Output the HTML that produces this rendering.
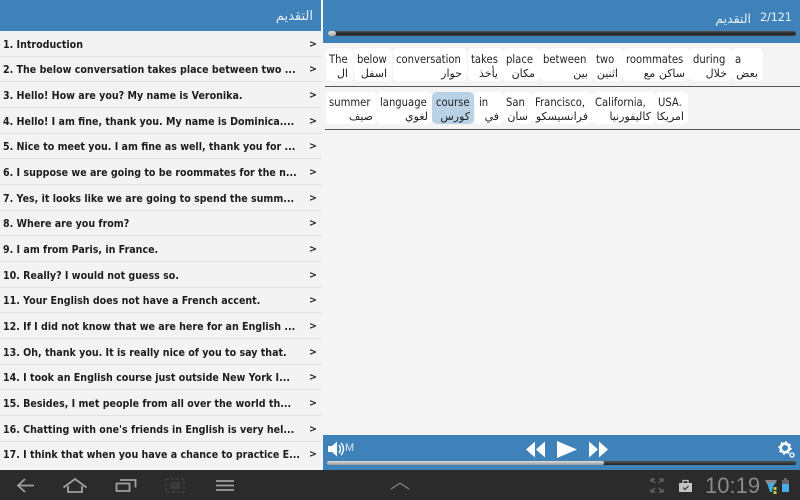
<!DOCTYPE html>
<html><head><meta charset="utf-8">
<style>
html,body{margin:0;padding:0;background:#f3f3f3}
#p{position:relative;width:800px;height:500px;overflow:hidden;background:#f4f4f4;font-family:"DejaVu Sans","Liberation Sans",sans-serif}
#p div{position:absolute}
.r{left:0;width:321px;height:25.67px;background:#f3f3f3;border-bottom:1px solid #e2e2e2;box-sizing:border-box}
.r span{position:absolute;left:3px;top:5.500px;font-size:11px;font-weight:bold;color:#1c1c1c;white-space:nowrap;line-height:15px;transform:scaleX(.865);transform-origin:0 0}
.r b{position:absolute;left:309px;top:5.500px;font-size:9.500px;color:#222;line-height:15px}
.c{background:#fff;border-radius:5px}
.c i,.c u{position:absolute;font-style:normal;text-decoration:none;white-space:nowrap;font-size:10.500px;color:#222;line-height:14px}
.c i{left:3px;top:3.500px;font-size:11.500px;transform:scaleX(.873);transform-origin:0 0}
.c u{right:5px;top:19px;font-size:11px}
.t2 i{top:2.500px}
.t2 u{right:4px;top:18px}
.ln{left:325px;width:475px;height:1px;background:#555}
</style></head><body><div id="p">
<div style="left:0;top:0;width:321px;height:31px;background:#3f82b9"></div>
<div style="left:323px;top:0;width:477px;height:43px;background:#3f82b9"></div>
<div style="right:487px;top:8px;font-size:13px;line-height:18px;color:#e8f0f6;direction:rtl">التقديم</div>
<div style="left:716px;top:10px;width:35px;text-align:right;font-size:12.500px;line-height:18px;color:#e8f0f6;white-space:nowrap;direction:rtl">التقديم</div>
<div style="left:760px;top:8px;font-size:11.500px;line-height:18px;color:#e8f0f6;white-space:nowrap;letter-spacing:-.3px">2/121</div>
<div style="left:328px;top:31px;width:468px;height:5px;border-radius:3px;background:linear-gradient(#555,#222 60%,#444)"></div>
<div style="left:328px;top:31px;width:8px;height:5px;border-radius:3px;background:linear-gradient(#ddd,#aaa)"></div>

<div class="r" style="top:31px"><span>1. Introduction</span><b>&gt;</b></div>
<div class="r" style="top:56.67px"><span>2. The below conversation takes place between two ...</span><b>&gt;</b></div>
<div class="r" style="top:82.33px"><span>3. Hello! How are you? My name is Veronika.</span><b>&gt;</b></div>
<div class="r" style="top:108px"><span>4. Hello! I am fine, thank you. My name is Dominica....</span><b>&gt;</b></div>
<div class="r" style="top:133.67px"><span>5. Nice to meet you. I am fine as well, thank you for ...</span><b>&gt;</b></div>
<div class="r" style="top:159.33px"><span>6. I suppose we are going to be roommates for the n...</span><b>&gt;</b></div>
<div class="r" style="top:185px"><span>7. Yes, it looks like we are going to spend the summ...</span><b>&gt;</b></div>
<div class="r" style="top:210.67px"><span>8. Where are you from?</span><b>&gt;</b></div>
<div class="r" style="top:236.33px"><span>9. I am from Paris, in France.</span><b>&gt;</b></div>
<div class="r" style="top:262px"><span>10. Really? I would not guess so.</span><b>&gt;</b></div>
<div class="r" style="top:287.67px"><span>11. Your English does not have a French accent.</span><b>&gt;</b></div>
<div class="r" style="top:313.33px"><span>12. If I did not know that we are here for an English ...</span><b>&gt;</b></div>
<div class="r" style="top:339px"><span>13. Oh, thank you. It is really nice of you to say that.</span><b>&gt;</b></div>
<div class="r" style="top:364.67px"><span>14. I took an English course just outside New York I...</span><b>&gt;</b></div>
<div class="r" style="top:390.33px"><span>15. Besides, I met people from all over the world th...</span><b>&gt;</b></div>
<div class="r" style="top:416px"><span>16. Chatting with one's friends in English is very hel...</span><b>&gt;</b></div>
<div class="r" style="top:441.67px;height:28.33px;border:0"><span>17. I think that when you have a chance to practice E...</span><b>&gt;</b></div>

<div class="c" style="left:326px;top:48px;width:27px;height:33px"><i>The</i><u>ال</u></div>
<div class="c" style="left:354px;top:48px;width:38px;height:33px"><i>below</i><u>اسفل</u></div>
<div class="c" style="left:393px;top:48px;width:74px;height:33px"><i>conversation</i><u>حوار</u></div>
<div class="c" style="left:468px;top:48px;width:35px;height:33px"><i>takes</i><u>يأخذ</u></div>
<div class="c" style="left:503px;top:48px;width:37px;height:33px"><i>place</i><u>مكان</u></div>
<div class="c" style="left:540px;top:48px;width:53px;height:33px"><i>between</i><u>بين</u></div>
<div class="c" style="left:593px;top:48px;width:30px;height:33px"><i>two</i><u>اثنين</u></div>
<div class="c" style="left:623px;top:48px;width:67px;height:33px"><i>roommates</i><u>ساكن مع</u></div>
<div class="c" style="left:690px;top:48px;width:42px;height:33px"><i>during</i><u>خلال</u></div>
<div class="c" style="left:732px;top:48px;width:31px;height:33px"><i>a</i><u>بعض</u></div>
<div class="ln" style="top:86px"></div>

<div class="c t2" style="left:326px;top:92px;width:51px;height:32px"><i>summer</i><u>صيف</u></div>
<div class="c t2" style="left:377px;top:92px;width:55px;height:32px"><i>language</i><u>لغوي</u></div>
<div class="c t2" style="left:432px;top:92px;width:42px;height:32px;background:#b9d2e6"><i style="left:4px">course</i><u>كورس</u></div>
<div class="c t2" style="left:475px;top:92px;width:28px;height:32px"><i style="left:4px">in</i><u>في</u></div>
<div class="c t2" style="left:503px;top:92px;width:29px;height:32px"><i>San</i><u>سان</u></div>
<div class="c t2" style="left:532px;top:92px;width:60px;height:32px"><i>Francisco,</i><u>فرانسيسكو</u></div>
<div class="c t2" style="left:592px;top:92px;width:63px;height:32px"><i>California,</i><u>كاليفورنيا</u></div>
<div class="c t2" style="left:655px;top:92px;width:33px;height:32px"><i>USA.</i><u>امريكا</u></div>
<div class="ln" style="top:129px"></div>

<div style="left:323px;top:435px;width:477px;height:35px;background:#3f82b9"></div>
<div style="left:327px;top:461px;width:469px;height:4px;border-radius:2px;background:linear-gradient(#555,#222)"></div>
<div style="left:327px;top:461px;width:277px;height:4px;border-radius:2px;background:linear-gradient(#ddd,#999)"></div>
<div style="left:345px;top:441px;font-size:11px;line-height:15px;color:#dfe9f2;font-family:'Liberation Sans',sans-serif">M</div>

<div style="left:0;top:470px;width:800px;height:30px;background:#2b2b2b"></div>
<svg style="position:absolute;left:0;top:0" width="800" height="500" viewBox="0 0 800 500">
<g fill="#fff">
<path d="M328 446h4l5-4.500v15l-5-4.500h-4z"/>
<path d="M339 445q3 4 0 8M341 443q5 6 0 12" fill="none" stroke="#fff" stroke-width="1.400"/>
<path d="M526 449.500l9-8v16zM536 449.500l9-8v16z"/>
<path d="M557 441l20 8.500-20 8.500z"/>
<path d="M589 441.500l9 8-9 8zM599 441.500l9 8-9 8z"/>
<circle cx="785" cy="448" r="4.300" fill="none" stroke="#fff" stroke-width="2.600"/>
<circle cx="785" cy="448" r="6" fill="none" stroke="#fff" stroke-width="1.500" stroke-dasharray="2 2.700"/>
<circle cx="792" cy="455" r="2" fill="none" stroke="#fff" stroke-width="1.300"/>
</g>
<g fill="none" stroke="#a0a0a0" stroke-width="1.800">
<path d="M34 485.500H18M25 479l-7 6.500 7 6.500"/>
<path d="M63.500 487.500L75 479l11.500 8.500M68 486v6h14v-6"/>
<path d="M116.500 483.500h13v7.500h-13zM120 480h15.500v7.500"/>
<path d="M216 481h18M216 485.500h18M216 490h18"/>
</g>
<path d="M391 489l9-6 9 6" fill="none" stroke="#8a8a8a" stroke-width="1.100"/>
<rect x="166" y="479" width="18" height="13" fill="none" stroke="#444" stroke-width="1.200" stroke-dasharray="3 2"/>
<rect x="170" y="482" width="10" height="7" fill="#3a3a3a"/>
<path d="M651 482v-3h4M663 482v-3h-4M651 489v3h4M663 489v3h-4M652 480l3 3M662 480l-3 3M652 491l3-3M662 491l-3-3" fill="none" stroke="#666" stroke-width="1.300"/>
<path d="M679 483h13v9h-13z" fill="#c4c4c4"/>
<path d="M683 483v-2.500h5v2.500" fill="none" stroke="#c4c4c4" stroke-width="1.300"/>
<path d="M683 487.500l2 2 3.500-3.500" fill="none" stroke="#333" stroke-width="1.200"/>
<path d="M765 480h12l-1.500 3h-9z" fill="#8a8a8a"/>
<path d="M766.500 483h9l-2 3h-5z" fill="#49aee4"/>
<path d="M768 486h5l-1 6h-2z" fill="#49aee4"/>
<path d="M775 487v3M775 491v3" stroke="#b6d23a" stroke-width="3"/>
<rect x="784" y="478" width="3" height="2" fill="#666"/>
<rect x="782" y="480" width="7" height="4" fill="#666"/>
<rect x="782" y="484" width="7" height="8" fill="#49aee4"/>
</svg>
<div style="left:705px;top:472px;font-family:'Liberation Sans',sans-serif;font-size:22px;line-height:28px;color:#8a8a8a;white-space:nowrap">10:19</div>
</div></body></html>
